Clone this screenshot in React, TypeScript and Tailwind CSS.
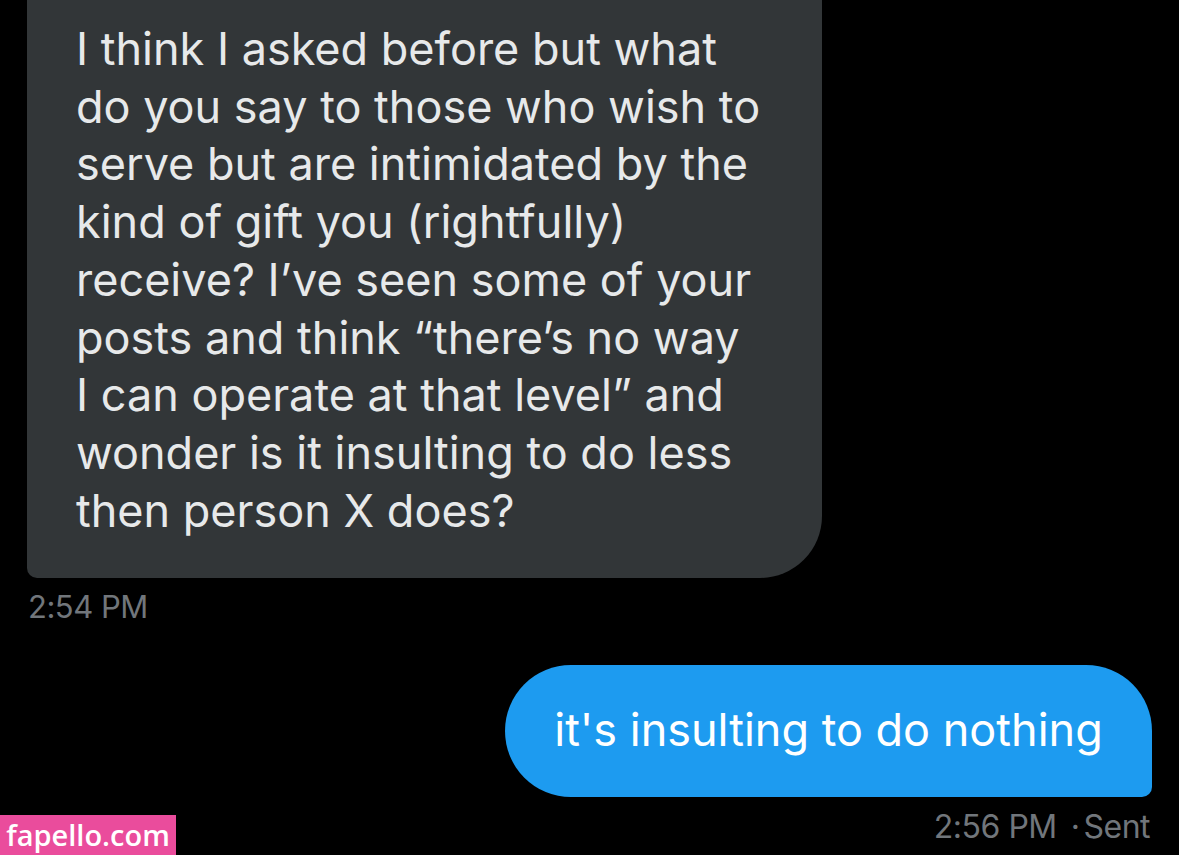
import React from "react";

const lines = [
  "I think I asked before but what",
  "do you say to those who wish to",
  "serve but are intimidated by the",
  "kind of gift you (rightfully)",
  "receive? I\u2019ve seen some of your",
  "posts and think \u201cthere\u2019s no way",
  "I can operate at that level\u201d and",
  "wonder is it insulting to do less",
  "then person X does?",
];

export default function App() {
  return (
    <div
      className="relative h-[855px] w-[1179px] overflow-hidden bg-black"
      style={{ fontFamily: "Inter, Roboto, 'Liberation Sans', sans-serif" }}
    >
      <div className="flex flex-col">
        <div className="ml-[27px] w-[795px] rounded-bl-[10px] rounded-br-[62px] bg-[#323638] pb-[39px] pl-[49px] pt-[20px] text-[45px] leading-[57.7px] text-[#e7e9ea]">
          {lines.map((l, i) => (
            <div key={i} className="whitespace-nowrap">
              {l}
            </div>
          ))}
        </div>
        <div className="ml-[28px] mt-[11px] text-[31px] leading-[36px] text-[#71767b] tracking-[-0.5px]">
          2:54 PM
        </div>
        <div className="mr-[27px] mt-[40px] flex justify-end">
          <div className="flex h-[132px] w-[647px] items-center justify-center rounded-bl-[66px] rounded-br-[10px] rounded-tl-[66px] rounded-tr-[66px] bg-[#1d9bf0] pb-[4px] text-[45px] text-white">
            it's insulting to do nothing
          </div>
        </div>
        <div className="mr-[29px] mt-[12px] flex justify-end text-[32px] leading-[36px] text-[#71767b] tracking-[-0.5px]">
          <span>2:56 PM</span>
          <span className="ml-[14px]">·</span>
          <span className="ml-[4px]">Sent</span>
        </div>
      </div>
      <div
        className="absolute bottom-0 left-0 flex h-[40px] w-[176px] items-center justify-center bg-[#ea4c9c] text-[29px] font-semibold text-white"
        style={{ fontFamily: "'Open Sans', sans-serif" }}
      >
        fapello.com
      </div>
    </div>
  );
}
